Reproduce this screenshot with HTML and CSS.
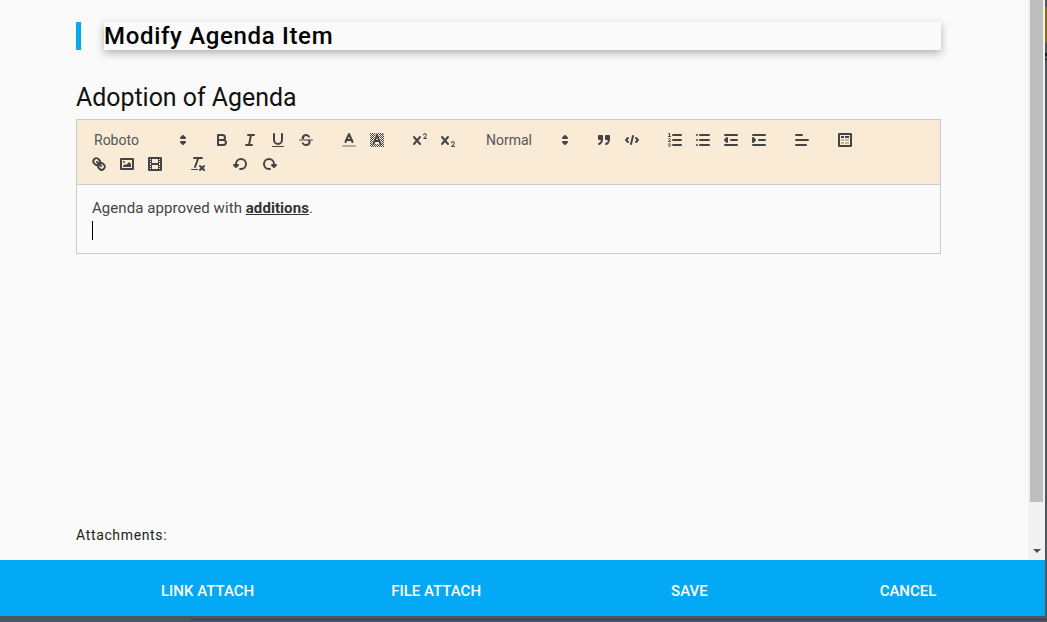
FILE: index.html
```html
<!DOCTYPE html>
<html lang="en">
<head>
<meta charset="utf-8">
<title>Modify Agenda Item</title>
<link rel="stylesheet" href="styles.css">
</head>
<body>
<div class="window">
  <div class="content">
    <main class="main">
      <div class="title-row">
        <span class="title-bar"></span>
        <h1 class="title">Modify Agenda Item</h1>
      </div>
      <h2 class="subject">Adoption of Agenda</h2>
      <div class="editor">
        <div class="toolbar">
          <div class="group">
            <div class="picker picker-font"><span>Roboto</span><svg viewBox="0 0 18 18"><polygon class="s" points="7 11 9 13 11 11 7 11"/><polygon class="s" points="7 7 9 5 11 7 7 7"/></svg></div>
          </div>
          <div class="group">
            <button class="tool"><svg viewBox="0 0 18 18"><path class="s" d="M5,4H9.5A2.5,2.5,0,0,1,12,6.5v0A2.5,2.5,0,0,1,9.5,9H5V4Z"/><path class="s" d="M5,9h5.5A2.5,2.5,0,0,1,13,11.5v0A2.5,2.5,0,0,1,10.5,14H5V9Z"/></svg></button>
            <button class="tool"><svg viewBox="0 0 18 18"><line class="s" x1="7" x2="13" y1="4" y2="4"/><line class="s" x1="5" x2="11" y1="14" y2="14"/><line class="s" x1="8" x2="10" y1="14" y2="4"/></svg></button>
            <button class="tool"><svg viewBox="0 0 18 18"><path class="s" d="M5,3V9a4.012,4.012,0,0,0,4,4H9a4.012,4.012,0,0,0,4-4V3"/><rect class="f" height="1" rx="0.5" ry="0.5" width="12" x="3" y="15"/></svg></button>
            <button class="tool"><svg viewBox="0 0 18 18"><line class="t" x1="15.5" x2="2.5" y1="9" y2="9"/><path class="f" d="M9,9a5.412,5.412,0,0,1,1.3.3c0.9.4,1.3,1.1,1.3,1.7,0,1.3-1.3,2-2.6,2a3,3,0,0,1-2.7-1.5H4.5C5,13.4,6.9,15,9,15c2.5,0,4.6-1.6,4.6-4,0-.7-.2-1.4-.7-2ZM9,3C6.9,3,5,4.3,4.7,6.3c-.1.6,0,1.2.2,1.7H7.2A1.5,1.5,0,0,1,7,7c0-1,1-2,2-2a2.9,2.9,0,0,1,2.6,1.5h1.7C12.9,4.6,11,3,9,3Z"/></svg></button>
          </div>
          <div class="group">
            <button class="tool"><svg viewBox="0 0 18 18"><line class="s faint" x1="3" x2="15" y1="15" y2="15"/><polyline class="s" points="5.5 11 9 3 12.5 11"/><line class="s" x1="11.63" x2="6.38" y1="9" y2="9"/></svg></button>
            <button class="tool"><svg viewBox="0 0 18 18"><defs><pattern id="hatch" width="2" height="2" patternUnits="userSpaceOnUse"><rect width="1" height="1" fill="#444"/><rect x="1" y="1" width="1" height="1" fill="#444"/></pattern></defs><rect x="2" y="2" width="14" height="14" fill="url(#hatch)"/><polyline class="halo" points="5.5 13 9 4 12.5 13"/><polyline class="s" points="5.5 13 9 4 12.5 13"/><line class="s" x1="11.3" x2="6.7" y1="10" y2="10"/></svg></button>
          </div>
          <div class="group">
            <button class="tool"><svg viewBox="0 0 18 18"><path class="s" d="M3,6l6,7M9,6l-6,7"/><path class="f" d="M15.5,7H13.861a4.015,4.015,0,0,0,1.914-2.975,1.8,1.8,0,0,0-1.6-1.751A1.921,1.921,0,0,0,12.021,3.7a0.5,0.5,0,1,0,.957.291h0a0.914,0.914,0,0,1,1.053-.725,0.81,0.81,0,0,1,.744.762c0,1.076-1.16,1.94-1.686,2.285A1.006,1.006,0,0,0,12.5,7.5V8h3a0.5,0.5,0,0,0,0-1Z"/></svg></button>
            <button class="tool"><svg viewBox="0 0 18 18"><path class="s" d="M3,6l6,7M9,6l-6,7"/><path class="f" d="M15.5,15H13.861a3.858,3.858,0,0,0,1.914-2.975,1.8,1.8,0,0,0-1.6-1.751A1.921,1.921,0,0,0,12.021,11.7a0.5,0.5,0,1,0,.957.291h0a0.914,0.914,0,0,1,1.053-.725,0.81,0.81,0,0,1,.744.762c0,1.076-1.159,1.962-1.686,2.308A1,1,0,0,0,12.5,16h3a0.5,0.5,0,0,0,0-1Z"/></svg></button>
          </div>
          <div class="group">
            <div class="picker picker-header"><span>Normal</span><svg viewBox="0 0 18 18"><polygon class="s" points="7 11 9 13 11 11 7 11"/><polygon class="s" points="7 7 9 5 11 7 7 7"/></svg></div>
          </div>
          <div class="group">
            <button class="tool"><svg viewBox="0 0 18 18"><rect class="s f" height="3" width="3" x="4" y="5"/><rect class="s f" height="3" width="3" x="11" y="5"/><path class="s" d="M7,8c0,4.031-3,5-3,5"/><path class="s" d="M14,8c0,4.031-3,5-3,5"/></svg></button>
            <button class="tool"><svg viewBox="0 0 18 18"><polyline class="s" points="5 7 3 9 5 11"/><polyline class="s" points="13 7 15 9 13 11"/><line class="s" x1="10" x2="8" y1="5" y2="13"/></svg></button>
          </div>
          <div class="group">
            <button class="tool"><svg viewBox="0 0 18 18"><line class="s" x1="7" x2="15" y1="4" y2="4"/><line class="s" x1="7" x2="15" y1="9" y2="9"/><line class="s" x1="7" x2="15" y1="14" y2="14"/><line class="t" x1="2.5" x2="4.5" y1="5.5" y2="5.5"/><path class="f" d="M3.5,6A0.5,0.5,0,0,1,3,5.5V3.085l-0.276.138A0.5,0.5,0,0,1,2.053,3c-0.124-.247-0.023-0.324.224-0.447l1-.5A0.5,0.5,0,0,1,4,2.5v3A0.5,0.5,0,0,1,3.5,6Z"/><path class="t" d="M4.5,10.5h-2c0-.234,1.85-1.076,1.85-2.234A0.959,0.959,0,0,0,2.5,8.156"/><path class="t" d="M2.5,14.846a0.959,0.959,0,0,0,1.85-.109A0.7,0.7,0,0,0,3.75,14a0.688,0.688,0,0,0,.6-0.736,0.959,0.959,0,0,0-1.85-.109"/></svg></button>
            <button class="tool"><svg viewBox="0 0 18 18"><line class="s" x1="6" x2="15" y1="4" y2="4"/><line class="s" x1="6" x2="15" y1="9" y2="9"/><line class="s" x1="6" x2="15" y1="14" y2="14"/><line class="s" x1="3" x2="3" y1="4" y2="4"/><line class="s" x1="3" x2="3" y1="9" y2="9"/><line class="s" x1="3" x2="3" y1="14" y2="14"/></svg></button>
            <button class="tool"><svg viewBox="0 0 18 18"><line class="s" x1="3" x2="15" y1="14" y2="14"/><line class="s" x1="3" x2="15" y1="4" y2="4"/><line class="s" x1="9" x2="15" y1="9" y2="9"/><polyline class="s f" points="5 7 5 11 3 9 5 7"/></svg></button>
            <button class="tool"><svg viewBox="0 0 18 18"><line class="s" x1="3" x2="15" y1="14" y2="14"/><line class="s" x1="3" x2="15" y1="4" y2="4"/><line class="s" x1="9" x2="15" y1="9" y2="9"/><polyline class="s f" points="3 7 3 11 5 9 3 7"/></svg></button>
          </div>
          <div class="group">
            <button class="tool"><svg viewBox="0 0 18 18"><line class="s" x1="3" x2="15" y1="9" y2="9"/><line class="s" x1="3" x2="13" y1="14" y2="14"/><line class="s" x1="3" x2="9" y1="4" y2="4"/></svg></button>
          </div>
          <div class="group">
            <button class="tool"><svg viewBox="0 0 18 18"><rect class="s" height="12" width="12" x="3" y="3"/><rect class="f" height="2" width="3" x="5" y="5"/><rect class="f" height="2" width="4" x="9" y="5"/><g class="f dim"><rect height="2" width="3" x="5" y="8"/><rect height="2" width="4" x="9" y="8"/><rect height="2" width="3" x="5" y="11"/><rect height="2" width="4" x="9" y="11"/></g></svg></button>
          </div>
          <div class="group">
            <button class="tool"><svg viewBox="0 0 18 18"><line class="s" x1="7" x2="11" y1="7" y2="11"/><path class="s" d="M8.9,4.577a3.476,3.476,0,0,1,.36,4.679A3.476,3.476,0,0,1,4.577,8.9C3.185,7.5,2.035,6.4,4.217,4.217S7.5,3.185,8.9,4.577Z"/><path class="s" d="M13.423,9.1a3.476,3.476,0,0,0-4.679-.36,3.476,3.476,0,0,0,.36,4.679c1.392,1.392,2.5,2.542,4.679.36S14.815,10.5,13.423,9.1Z"/></svg></button>
            <button class="tool"><svg viewBox="0 0 18 18"><rect class="s" height="10" width="12" x="3" y="4"/><circle class="f" cx="6" cy="7" r="1"/><polyline class="f" points="5 12 5 11 7 9 8 10 11 7 13 9 13 12 5 12"/></svg></button>
            <button class="tool"><svg viewBox="0 0 18 18"><rect class="s" height="12" width="12" x="3" y="3"/><rect class="f" height="12" width="1" x="5" y="3"/><rect class="f" height="12" width="1" x="12" y="3"/><rect class="f" height="2" width="8" x="5" y="8"/><rect class="f" height="1" width="3" x="3" y="5"/><rect class="f" height="1" width="3" x="3" y="7"/><rect class="f" height="1" width="3" x="3" y="10"/><rect class="f" height="1" width="3" x="3" y="12"/><rect class="f" height="1" width="3" x="12" y="5"/><rect class="f" height="1" width="3" x="12" y="7"/><rect class="f" height="1" width="3" x="12" y="10"/><rect class="f" height="1" width="3" x="12" y="12"/></svg></button>
          </div>
          <div class="group">
            <button class="tool"><svg viewBox="0 0 18 18"><line class="s" x1="5" x2="13" y1="3" y2="3"/><line class="s" x1="6" x2="9.35" y1="12" y2="3"/><line class="s" x1="11" x2="15" y1="11" y2="15"/><line class="s" x1="15" x2="11" y1="11" y2="15"/><rect class="f" height="1" rx="0.5" ry="0.5" width="7" x="2" y="14"/></svg></button>
          </div>
          <div class="group">
            <button class="tool"><svg viewBox="0 0 18 18"><polygon class="s f" points="6 10 4 12 2 10 6 10"/><path class="s" d="M8.09,13.91A4.6,4.6,0,0,0,9,14,5,5,0,1,0,4,9"/></svg></button>
            <button class="tool"><svg viewBox="0 0 18 18"><polygon class="s f" points="12 10 14 12 16 10 12 10"/><path class="s" d="M9.91,13.91A4.6,4.6,0,0,1,9,14a5,5,0,1,1,5-5"/></svg></button>
          </div>
        </div>
        <div class="body">
          <p class="para">Agenda approved with <strong class="mark">additions</strong>.</p>
          <p class="para"><span class="caret"></span></p>
        </div>
      </div>
      <div class="attachments">Attachments:</div>
    </main>
    <div class="scrollbar">
      <div class="thumb"></div>
      <div class="arrow"></div>
    </div>
  </div>
  <footer class="footer">
    <button class="action action-link">LINK ATTACH</button>
    <button class="action action-file">FILE ATTACH</button>
    <button class="action action-save">SAVE</button>
    <button class="action action-cancel">CANCEL</button>
  </footer>
</div>
<div class="edge">
  <span class="edge-top"></span>
  <span class="edge-gold"></span>
  <span class="edge-gray"></span>
  <span class="edge-black"></span>
  <span class="edge-gray-short"></span>
  <span class="edge-line"></span>
</div>
<div class="base-line"></div>
</body>
</html>
```
FILE: styles.css
```css
* { box-sizing: border-box; }
html, body { margin: 0; height: 622px; overflow: hidden; }
body {
  background: #4a5660;
  font-family: Roboto, "Liberation Sans", sans-serif;
  position: relative;
}
.window {
  width: 1045px;
  height: 616px;
  display: flex;
  flex-direction: column;
  background: #fafafa;
}
.content { flex: 1; display: flex; min-height: 0; }
.main {
  flex: 1;
  padding: 22px 87px 0 76px;
  display: flex;
  flex-direction: column;
}
.title-row { display: flex; gap: 23px; height: 28px; }
.title-bar { width: 5px; background: #03a9f4; }
.title {
  flex: 1;
  margin: 0;
  font-size: 24px;
  line-height: 28px;
  font-weight: 500;
  letter-spacing: 0.67px;
  color: #000;
  box-shadow: 0 3px 8px rgba(0, 0, 0, 0.3);
  background: #fafafa;
}
.subject {
  margin: 33px 0 7px;
  font-size: 24.9px;
  line-height: 29px;
  font-weight: 400;
  color: #111;
}
.editor { border: 1px solid #ccc; }
.toolbar {
  display: flex;
  flex-wrap: wrap;
  padding: 8px;
  background: #faebd7;
  border-bottom: 1px solid #ccc;
  height: 65px;
  row-gap: 0;
  align-content: flex-start;
}
.group { display: flex; margin-right: 15px; height: 24px; }
.tool {
  width: 28px;
  height: 24px;
  padding: 3px 5px;
  border: 0;
  background: none;
}
.tool svg { display: block; width: 18px; height: 18px; }
.s { fill: none; stroke: #444; stroke-width: 2; stroke-linecap: round; stroke-linejoin: round; }
.t { fill: none; stroke: #444; stroke-width: 1; stroke-linecap: round; stroke-linejoin: round; }
.f { fill: #444; }
.s.f { fill: #444; }
.halo { fill: #faebd7; stroke: #faebd7; stroke-width: 3; stroke-linejoin: round; }
.faint { stroke: #b5aca0; }
.dim { opacity: 0.3; }
.picker {
  display: flex;
  align-items: center;
  justify-content: space-between;
  height: 24px;
  padding: 0 1px 0 9px;
  font-size: 14px;
  color: #555;
}
.picker svg { width: 18px; height: 18px; }
.picker-font { width: 108px; }
.picker-header { width: 98px; }
.body {
  height: 68px;
  padding: 13px 15px 11px;
  font-size: 15px;
  letter-spacing: 0.07px;
  line-height: 21px;
  color: #444;
}
.para { margin: 0; height: 21px; }
.mark { font-weight: 700; text-decoration: underline; color: #333; }
.caret { display: block; width: 1px; height: 19px; background: #000; margin-top: 2px; }
.attachments {
  margin-top: auto;
  margin-bottom: 16px;
  font-size: 14px;
  line-height: 18px;
  letter-spacing: 0.65px;
  color: #222;
}
.scrollbar {
  width: 17px;
  background: #f1f1f1;
  padding: 0 2px;
  display: flex;
  flex-direction: column;
  align-items: center;
}
.thumb { width: 13px; height: 502px; background: #bdbdbd; flex: none; }
.arrow {
  margin-top: 47px;
  width: 0;
  height: 0;
  border-left: 4px solid transparent;
  border-right: 4px solid transparent;
  border-top: 4px solid #505050;
}
.footer {
  height: 56px;
  flex: none;
  background: #03a9f4;
  display: flex;
  align-items: center;
  padding: 6px 0 0 161px;
}
.action {
  padding: 0;
  border: 0;
  background: none;
  color: #fff;
  font: 500 15px/20px Roboto, "Liberation Sans", sans-serif;
}
.action-file { margin-left: 137px; }
.action-save { margin-left: 190px; }
.action-cancel { margin-left: 172px; }
.edge {
  position: absolute;
  left: 1045px;
  top: 0;
  width: 2px;
  height: 622px;
  display: flex;
  flex-direction: column;
}
.edge-top { height: 7px; background: #4a5660; }
.edge-gold { height: 36px; background: #8a6d10; }
.edge-gray { height: 10px; background: #4c5054; }
.edge-black { height: 3px; background: #1a1a1a; }
.edge-gray-short { height: 3px; background: #4c5054; }
.edge-line { height: 1px; background: #1a1a1a; }
.base-line {
  position: absolute;
  left: 191px;
  top: 619px;
  right: 0;
  height: 1px;
  background: #1e4a5c;
}
```
